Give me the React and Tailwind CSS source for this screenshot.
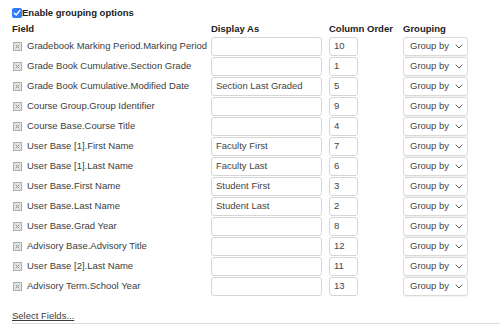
import React from "react";

const rows = [
  ["Gradebook Marking Period.Marking Period", "", "10"],
  ["Grade Book Cumulative.Section Grade", "", "1"],
  ["Grade Book Cumulative.Modified Date", "Section Last Graded", "5"],
  ["Course Group.Group Identifier", "", "9"],
  ["Course Base.Course Title", "", "4"],
  ["User Base [1].First Name", "Faculty First", "7"],
  ["User Base [1].Last Name", "Faculty Last", "6"],
  ["User Base.First Name", "Student First", "3"],
  ["User Base.Last Name", "Student Last", "2"],
  ["User Base.Grad Year", "", "8"],
  ["Advisory Base.Advisory Title", "", "12"],
  ["User Base [2].Last Name", "", "11"],
  ["Advisory Term.School Year", "", "13"],
];

function XIcon() {
  return (
    <svg width="9" height="9" viewBox="0 0 9 9" className="shrink-0">
      <rect x="0.5" y="0.5" width="8" height="8" fill="#e4e4e4" stroke="#b0b0b0" />
      <path d="M2.7 2.7 L6.3 6.3 M6.3 2.7 L2.7 6.3" stroke="#909090" strokeWidth="0.9" />
    </svg>
  );
}

function Check() {
  return (
    <span className="inline-flex w-[10px] h-[10px] rounded-[2px] bg-[#2f7df6] items-center justify-center shrink-0">
      <svg width="8" height="8" viewBox="0 0 8 8">
        <path d="M1.3 4.2 L3.2 6 L6.8 1.6" stroke="#fff" strokeWidth="1.4" fill="none" strokeLinecap="round" strokeLinejoin="round" />
      </svg>
    </span>
  );
}

export default function App() {
  return (
    <div className="w-[500px] h-[328px] bg-white overflow-hidden pt-[5px] pl-[12px] text-[9.5px] text-[#3c3c3c]" style={{ fontFamily: '"Liberation Sans", Arial, sans-serif' }}>
      <div className="border-b border-[#dcdcdc]">
        <div className="flex items-center h-[16px] font-bold text-[#222]">
          <Check />
          <span>Enable grouping options</span>
        </div>
        <div className="grid grid-cols-[199px_118px_74px_65px] h-[16px] leading-[16px] font-bold text-[#222]">
          <div>Field</div>
          <div>Display As</div>
          <div>Column Order</div>
          <div>Grouping</div>
        </div>
        <div className="grid grid-cols-[199px_118px_74px_65px] gap-y-[1px]">
          {rows.map(([field, display, order], i) => (
            <React.Fragment key={i}>
              <div className="flex items-center h-[19px] gap-[5px] pl-[1px] whitespace-nowrap">
                <XIcon />
                <span>{field}</span>
              </div>
              <div className="h-[19px] w-[111px] border border-[#d6d6d6] rounded-[3px] flex items-center pl-[4px] text-[#444]">
                {display}
              </div>
              <div className="h-[19px] w-[29px] border border-[#d6d6d6] rounded-[3px] flex items-center pl-[4px] text-[#444]">
                {order}
              </div>
              <div className="h-[19px] w-[65px] border border-[#dadada] rounded-[3px] flex items-center justify-between pl-[6px] pr-[4px] text-[#444] shadow-[0_0.5px_1px_rgba(0,0,0,0.06)]">
                <span>Group by</span>
                <svg width="8" height="5" viewBox="0 0 8 5">
                  <path d="M0.7 0.7 L4 4 L7.3 0.7" stroke="#555" strokeWidth="1" fill="none" />
                </svg>
              </div>
            </React.Fragment>
          ))}
        </div>
        <div className="mt-[13px] h-[14px] leading-[14px]">
          <span className="underline">Select Fields...</span>
        </div>
      </div>
    </div>
  );
}
